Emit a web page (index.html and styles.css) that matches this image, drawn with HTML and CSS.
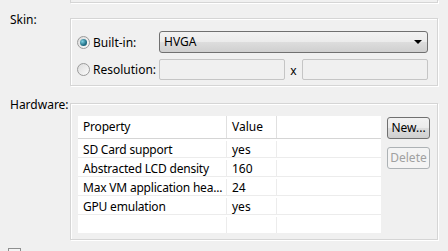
FILE: index.html
```html
<!DOCTYPE html>
<html lang="en">
<head>
    <meta charset="UTF-8">
    <title>AVD</title>
    <link rel="stylesheet" href="styles.css">
</head>
<body>
    <div class="prev"></div>

    <!-- Skin -->
    <div class="section skin">
        <div class="label">Skin:</div>
        <div class="group">
            <div class="row">
                <span class="radio on"></span>
                <span class="rtext">Built-in:</span>
                <div class="combo">HVGA<span class="arrow"></span></div>
            </div>
            <div class="row">
                <span class="radio"></span>
                <span class="rtext">Resolution:</span>
                <div class="field"></div>
                <span class="times">x</span>
                <div class="field wide"></div>
            </div>
        </div>
    </div>

    <!-- Hardware -->
    <div class="section hw">
        <div class="label">Hardware:</div>
        <div class="group hwgroup">
            <div class="table">
                <div class="tr head">
                    <div class="c1">Property</div>
                    <div class="c2">Value</div>
                    <div class="c3"></div>
                </div>
                <div class="tr">
                    <div class="c1">SD Card support</div>
                    <div class="c2">yes</div>
                    <div class="c3"></div>
                </div>
                <div class="tr">
                    <div class="c1">Abstracted LCD density</div>
                    <div class="c2">160</div>
                    <div class="c3"></div>
                </div>
                <div class="tr">
                    <div class="c1">Max VM application hea...</div>
                    <div class="c2">24</div>
                    <div class="c3"></div>
                </div>
                <div class="tr">
                    <div class="c1">GPU emulation</div>
                    <div class="c2">yes</div>
                    <div class="c3"></div>
                </div>
                <div class="tr filler">
                    <div class="c1"></div>
                    <div class="c2"></div>
                    <div class="c3"></div>
                </div>
            </div>
            <div class="buttons">
                <div class="btn">New...</div>
                <div class="btn off">Delete</div>
            </div>
        </div>
    </div>

    <div class="check"></div>
</body>
</html>
```

FILE: styles.css
```css
*{
    margin:0;
    padding:0;
    box-sizing:border-box;
}
html,body{
    height:100%;
    overflow:hidden;
}
body{
    background:#f0f0f0;
    font-family:"Noto Sans","Liberation Sans",sans-serif;
    font-size:12px;
    color:#000;
}
.prev{
    margin-left:70px;
    width:368px;
    height:3px;
    border:1px solid #d5d5d5;
    border-top:none;
    box-shadow:1px 1px #fff;
}
.section{
    display:flex;
    align-items:flex-start;
}
.skin{
    margin-top:15px;
}
.hw{
    margin-top:17px;
}
.label{
    width:70px;
    padding-left:10px;
    line-height:14px;
    margin-top:-5px;
}
.group{
    width:368px;
    border:1px solid #d5d5d5;
    box-shadow:inset 1px 1px #fff, 1px 1px #fff;
}
.skin .group{
    height:68px;
    padding:12px 0 0 6px;
}
.row{
    display:flex;
    align-items:center;
    height:22px;
    margin-bottom:6px;
}
.row + .row{
    height:20px;
}
.radio{
    width:13px;
    height:13px;
    border-radius:50%;
    border:1px solid #9a9a9a;
    background:linear-gradient(135deg,#dcdcdc,#fbfbfb);
    position:relative;
}
.radio.on::after{
    content:"";
    position:absolute;
    left:2px;
    top:2px;
    width:7px;
    height:7px;
    border-radius:50%;
    background:radial-gradient(circle at 35% 35%,#7fd0e2,#1f6f86 60%,#164e60);
}
.rtext{
    width:69px;
    padding-left:3px;
}
.combo{
    width:269px;
    height:22px;
    border:1px solid #707070;
    border-radius:3px;
    background:linear-gradient(#f2f2f2 0%,#ebebeb 50%,#dddddd 51%,#cfcfcf 100%);
    padding-left:4px;
    line-height:20px;
    position:relative;
}
.arrow{
    position:absolute;
    right:5px;
    top:8px;
    border-left:4px solid transparent;
    border-right:4px solid transparent;
    border-top:4px solid #000;
}
.field{
    width:126px;
    height:21px;
    border:1px solid #c5c5c5;
    border-radius:2px;
    background:#f0f0f0;
}
.field.wide{
    width:126px;
}
.times{
    width:17px;
    text-align:center;
    padding-top:2px;
}
.hwgroup{
    height:137px;
    display:flex;
    padding:12px 0 0 7px;
}
.table{
    width:303px;
    height:117px;
    background:#fff;
    display:flex;
    flex-direction:column;
}
.tr{
    display:flex;
    height:19px;
    line-height:17px;
    padding-top:2px;
    border-bottom:1px solid #ececec;
    white-space:nowrap;
}
.tr.head{
    height:23px;
    line-height:22px;
    padding-top:0;
    border-bottom:1px solid #d5d5d5;
}
.tr.filler{
    flex:1;
    border-bottom:none;
}
.c1{
    width:149px;
    padding-left:5px;
    border-right:1px solid #ececec;
    overflow:hidden;
    letter-spacing:-0.2px;
}
.c2{
    width:50px;
    padding-left:5px;
    border-right:1px solid #ececec;
}
.c3{
    flex:1;
}
.head .c1,.head .c2{
    border-right-color:#e0e0e0;
}
.buttons{
    margin-left:6px;
    margin-top:1px;
}
.btn{
    width:43px;
    height:22px;
    border:1px solid #707070;
    border-radius:3px;
    background:linear-gradient(#f2f2f2 0%,#ebebeb 50%,#dddddd 51%,#cfcfcf 100%);
    text-align:center;
    line-height:20px;
    margin-bottom:8px;
}
.btn.off{
    border-color:#adb2b5;
    background:#f4f4f4;
    color:#a0a0a0;
}
.check{
    margin:8px 0 0 8px;
    width:13px;
    height:13px;
    border:1px solid #8e8f8f;
    background:#f4f4f4;
}
```
